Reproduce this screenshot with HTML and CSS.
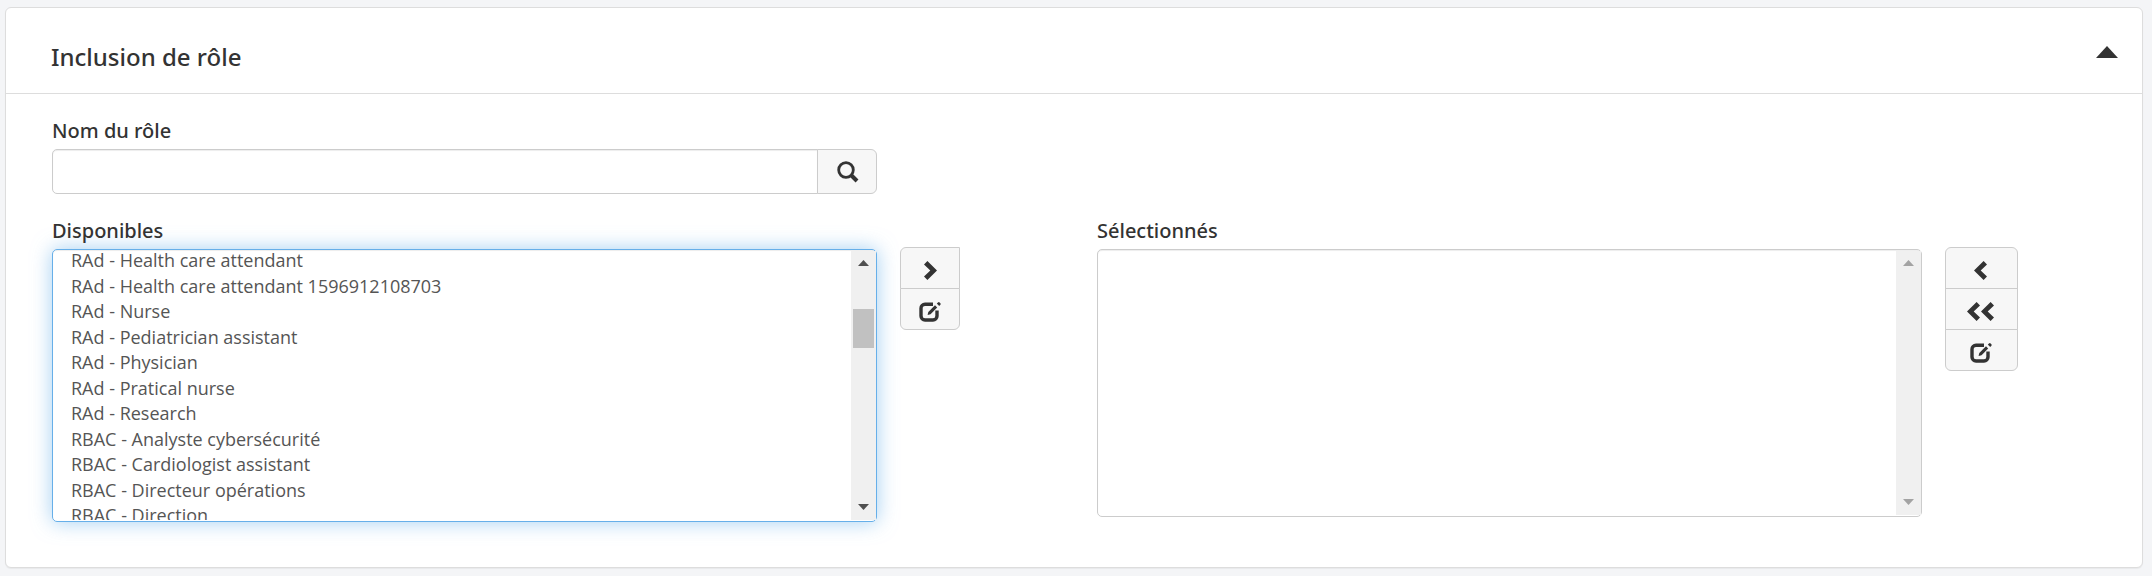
FILE: index.html
```html
<!DOCTYPE html>
<html lang="fr">
<head>
<meta charset="utf-8">
<title>Inclusion de rôle</title>
<link rel="stylesheet" href="styles.css">
</head>
<body>
<svg class="defs" aria-hidden="true">
  <symbol id="chevron" viewBox="-1 0 14 19"><path d="M3.4 0 13 9.5 3.4 19 0 15.6 6.3 9.5 0 3.4z"/></symbol>
  <symbol id="edit" viewBox="0 0 22 20"><path d="M14 2.200H6A4 4 0 0 0 2 6.200V14a4 4 0 0 0 4 4h8a4 4 0 0 0 4-4V8.500" fill="none" stroke="currentColor" stroke-width="3.400"/><path d="M8.600 13 9.300 10 16 3.200 18.200 5.400 11.500 12.200z"/><path d="M17.800 1.600 19 .4Q19.800-.2 20.600.5L21.400 1.300Q22 2.100 21.400 2.800L20.200 4z"/></symbol>
</svg>
<main class="card">
  <header class="card-header">
    <h1 class="title">Inclusion de rôle</h1>
    <button class="collapse" type="button" aria-label="Réduire">
      <svg width="22" height="12" viewBox="0 0 22 12"><path d="M11 0 22 12H0z"/></svg>
    </button>
  </header>
  <div class="card-body">
    <div class="search-field">
      <label for="role-name">Nom du rôle</label>
      <div class="search">
        <input id="role-name" type="text">
        <button type="button" aria-label="Rechercher">
          <svg class="outline" width="22" height="22" viewBox="0 0 22 22"><circle cx="9" cy="9" r="7.300" stroke-width="2.800"/><path d="M14 14 20 20" stroke-width="4"/></svg>
        </button>
      </div>
    </div>
    <div class="lists">
      <section class="column">
        <div class="field">
          <label for="available">Disponibles</label>
          <div class="listbox listbox-focus">
            <select id="available" multiple>
              <option>RAd - Health care attendant</option>
              <option>RAd - Health care attendant 1596912108703</option>
              <option>RAd - Nurse</option>
              <option>RAd - Pediatrician assistant</option>
              <option>RAd - Physician</option>
              <option>RAd - Pratical nurse</option>
              <option>RAd - Research</option>
              <option>RBAC - Analyste cybersécurité</option>
              <option>RBAC - Cardiologist assistant</option>
              <option>RBAC - Directeur opérations</option>
              <option>RBAC - Direction</option>
            </select>
            <div class="scrollbar" aria-hidden="true">
              <svg width="11" height="6" viewBox="0 0 11 6"><path d="M5.500 0 11 6H0z"/></svg>
              <div class="track"><div class="thumb"></div></div>
              <svg width="11" height="6" viewBox="0 0 11 6"><path d="M0 0H11L5.500 6z"/></svg>
            </div>
          </div>
        </div>
        <div class="actions actions-add">
          <button type="button" aria-label="Ajouter"><svg width="14" height="19"><use href="#chevron"/></svg></button>
          <button type="button" aria-label="Modifier"><svg width="22" height="20"><use href="#edit"/></svg></button>
        </div>
      </section>
      <section class="column">
        <div class="field">
          <label for="selected">Sélectionnés</label>
          <div class="listbox">
            <select id="selected" multiple></select>
            <div class="scrollbar scrollbar-off" aria-hidden="true">
              <svg width="11" height="6" viewBox="0 0 11 6"><path d="M5.500 0 11 6H0z"/></svg>
              <svg width="11" height="6" viewBox="0 0 11 6"><path d="M0 0H11L5.500 6z"/></svg>
            </div>
          </div>
        </div>
        <div class="actions actions-remove">
          <button type="button" aria-label="Retirer"><svg class="flip" width="14" height="19"><use href="#chevron"/></svg></button>
          <button type="button" aria-label="Tout retirer"><svg class="flip" width="14" height="19"><use href="#chevron"/></svg><svg class="flip" width="14" height="19"><use href="#chevron"/></svg></button>
          <button type="button" aria-label="Modifier"><svg width="22" height="20"><use href="#edit"/></svg></button>
        </div>
      </section>
    </div>
  </div>
</main>
<script src="script.js"></script>
</body>
</html>
```
FILE: styles.css
```css
* { box-sizing: border-box; }
body {
  margin: 0;
  padding: 7px 9px 7px 5px;
  background: #f4f5f7;
  color: #333;
  font: 18px/24px "Open Sans", "Noto Sans", sans-serif;
}
svg { display: block; fill: currentColor; }
.outline { fill: none; stroke: currentColor; }
.defs { position: absolute; width: 0; height: 0; }
button { font: inherit; color: inherit; cursor: pointer; }

.card {
  background: #fff;
  border: 1px solid #ddd;
  border-radius: 6px;
  box-shadow: 0 1px 1px rgba(0, 0, 0, .05);
}
.card-header {
  display: flex;
  align-items: flex-start;
  justify-content: space-between;
  padding: 33px 24px 21px 45px;
  border-bottom: 1px solid #ddd;
}
.title, label { font-family: "Noto Sans", "Open Sans", sans-serif; font-weight: 500; }
.title { margin: 0; font-size: 24px; line-height: 31px; }
.collapse {
  display: flex;
  padding: 5px 0;
  border: 0;
  background: none;
}
.card-body { padding: 25px 0 45px 46px; }

label { display: block; margin-bottom: 6px; font-size: 20px; }
.field { width: calc(79% - 1px); min-width: 0; }
.search-field { width: calc(39.5% - 1px); margin-bottom: 25px; }
.search { display: flex; height: 45px; }
.search input {
  flex: 1;
  min-width: 0;
  padding: 8px 16px;
  border: 1px solid #ccc;
  border-radius: 5px 0 0 5px;
  box-shadow: inset 0 1px 1px rgba(0, 0, 0, .075);
  font: inherit;
  color: #555;
}
.search button {
  display: flex;
  align-items: center;
  justify-content: center;
  width: 60px;
  margin-left: -1px;
  padding: 0 0 0 2px;
  border: 1px solid #ccc;
  border-radius: 0 6px 6px 0;
  background: #f7f7f7;
}

.lists { display: grid; grid-template-columns: 1fr 1fr; }
.column { display: flex; align-items: flex-start; gap: 23px; }
.listbox {
  display: flex;
  height: 268px;
  padding: 1px 0;
  border: 1px solid #ccc;
  border-radius: 5px;
  box-shadow: inset 0 1px 1px rgba(0, 0, 0, .075);
}
.listbox-focus {
  height: 273px;
  border-color: #66afe9;
  box-shadow: inset 0 1px 1px rgba(0, 0, 0, .075), 0 0 20px rgba(102, 175, 233, .6);
}
.listbox select {
  flex: 1;
  min-width: 0;
  height: 100%;
  padding: 0 0 0 16px;
  border: 0;
  outline: 0;
  background: none;
  font: inherit;
  color: #555;
  scrollbar-width: none;
}
.listbox option { height: 25px; min-height: 0; padding: 0 2px; line-height: 25px; }
.listbox option:nth-child(odd) { height: 26px; }
.scrollbar {
  display: flex;
  flex-direction: column;
  align-items: center;
  justify-content: space-between;
  width: 25px;
  padding: 9px 0 10px;
  background: #f0f0f0;
  color: #505050;
}
.scrollbar-off { color: #a3a3a3; }
.track { flex: 1; width: 21px; padding-top: 43px; }
.thumb { height: 39px; background: #c1c1c1; }

.actions { display: flex; flex-direction: column; margin-top: 28px; }
.actions button {
  display: flex;
  align-items: center;
  justify-content: center;
  height: 42px;
  padding: 5px 0 0;
  border: 1px solid #ccc;
  background: #f7f7f7;
}
.actions button + button { margin-top: -1px; }
.actions button:first-child { border-radius: 6px 6px 0 0; }
.actions button:last-child { border-radius: 0 0 6px 6px; }
.actions-add { width: 60px; }
.actions-add button:first-child { border-top-right-radius: 0; }
.actions-remove { width: 73px; }
.flip { transform: scaleX(-1); }
```
FILE: script.js
```js
document.getElementById("available").scrollTop = 3;
```
